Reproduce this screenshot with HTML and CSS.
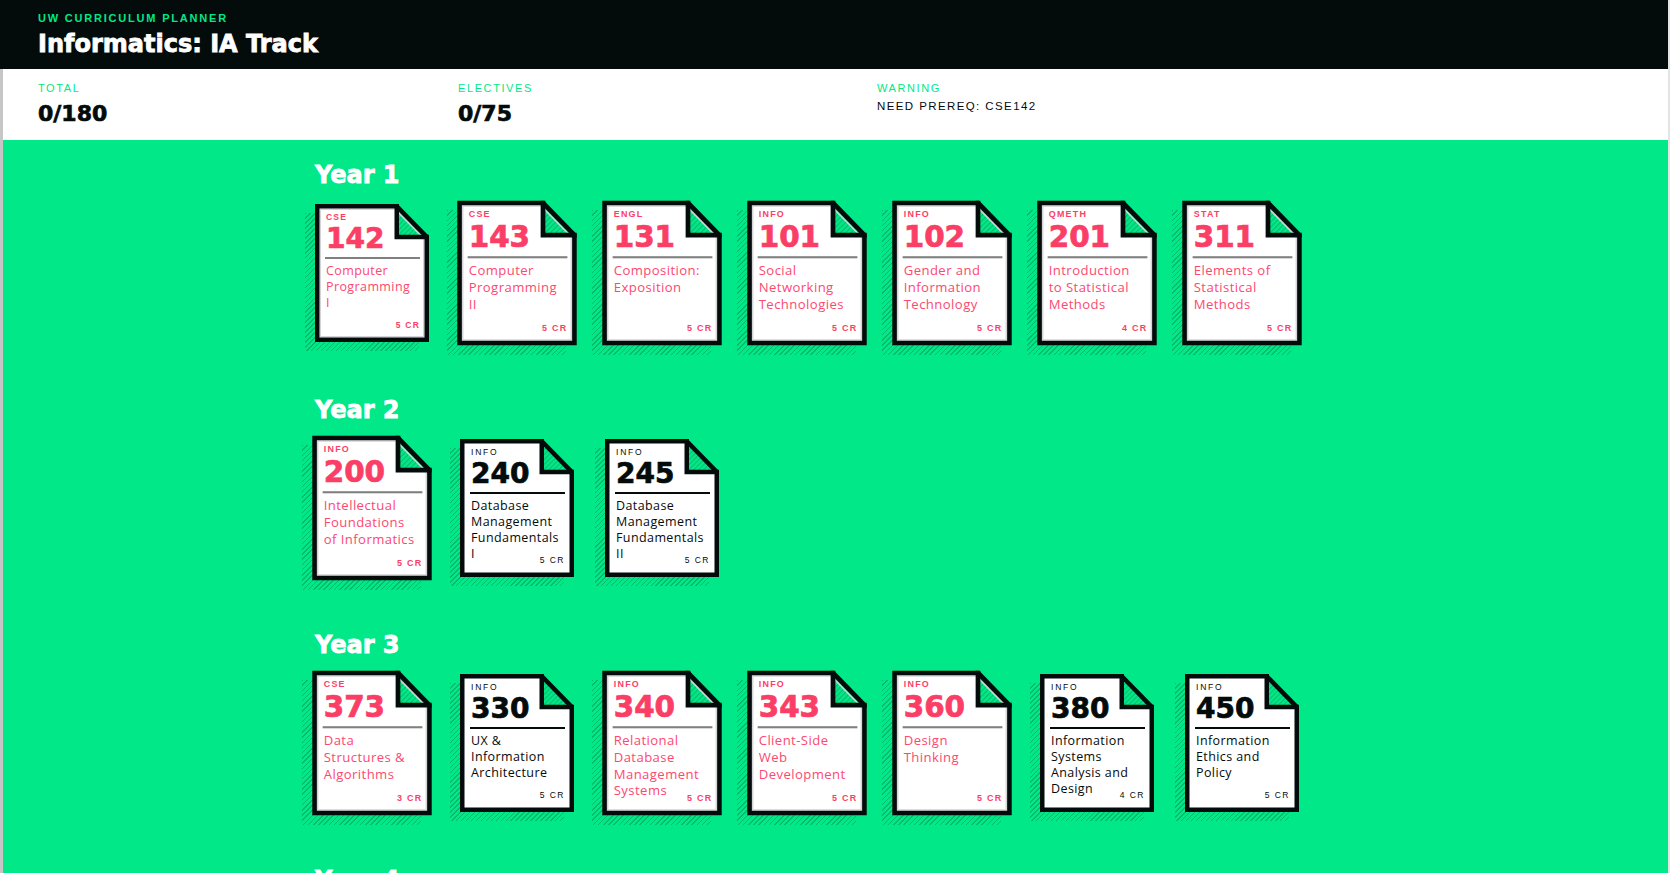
FILE: index.html
```html
<!DOCTYPE html>
<html lang="en">
<head>
<meta charset="utf-8">
<title>UW Curriculum Planner</title>
<link rel="stylesheet" href="styles.css">
</head>
<body>
<svg class="defs" aria-hidden="true">
  <defs>
    <pattern id="hatch" width="3.5" height="3.5" patternUnits="userSpaceOnUse" patternTransform="rotate(45)">
      <rect width="3.5" height="3.5" fill="#00e887"/>
      <rect width="1" height="3.5" fill="#07b96c"/>
    </pattern>
  </defs>
</svg>
<div class="page">
  <header class="top">
    <div class="app-name">UW CURRICULUM PLANNER</div>
    <h1 class="app-title">Informatics: IA Track</h1>
  </header>

  <section class="stats">
    <div class="stat">
      <div class="stat-label">TOTAL</div>
      <div class="stat-value">0/180</div>
    </div>
    <div class="stat">
      <div class="stat-label">ELECTIVES</div>
      <div class="stat-value">0/75</div>
    </div>
    <div class="stat">
      <div class="stat-label">WARNING</div>
      <div class="stat-note">NEED PREREQ: CSE142</div>
    </div>
  </section>

  <main class="plan">
    <section class="year">
      <h2 class="year-title">Year 1</h2>
      <div class="cards">
        <div class="card red">
          <svg class="frame" viewBox="0 0 114 138"><polygon class="sheet" points="2.25,2.25 81.75,2.25 111.75,33 111.75,135.75 2.25,135.75"/><polygon class="fold" points="81.75,2.25 111.75,33 81.75,33"/><polygon class="inner" points="5.25,5.25 80,5.25 108.75,34.5 108.75,132.75 5.25,132.75"/><polygon class="outline" points="2.25,2.25 81.75,2.25 111.75,33 111.75,135.75 2.25,135.75"/><polyline class="crease" points="81.75,2.25 81.75,33 111.75,33"/></svg>
          <div class="dept">CSE</div><div class="num">142</div><div class="rule"></div>
          <div class="title">Computer Programming I</div><div class="cr">5 CR</div>
        </div>
        <div class="card red big">
          <svg class="frame" viewBox="0 0 114 138"><polygon class="sheet" points="2.25,2.25 81.75,2.25 111.75,33 111.75,135.75 2.25,135.75"/><polygon class="fold" points="81.75,2.25 111.75,33 81.75,33"/><polygon class="inner" points="5.25,5.25 80,5.25 108.75,34.5 108.75,132.75 5.25,132.75"/><polygon class="outline" points="2.25,2.25 81.75,2.25 111.75,33 111.75,135.75 2.25,135.75"/><polyline class="crease" points="81.75,2.25 81.75,33 111.75,33"/></svg>
          <div class="dept">CSE</div><div class="num">143</div><div class="rule"></div>
          <div class="title">Computer Programming II</div><div class="cr">5 CR</div>
        </div>
        <div class="card red big">
          <svg class="frame" viewBox="0 0 114 138"><polygon class="sheet" points="2.25,2.25 81.75,2.25 111.75,33 111.75,135.75 2.25,135.75"/><polygon class="fold" points="81.75,2.25 111.75,33 81.75,33"/><polygon class="inner" points="5.25,5.25 80,5.25 108.75,34.5 108.75,132.75 5.25,132.75"/><polygon class="outline" points="2.25,2.25 81.75,2.25 111.75,33 111.75,135.75 2.25,135.75"/><polyline class="crease" points="81.75,2.25 81.75,33 111.75,33"/></svg>
          <div class="dept">ENGL</div><div class="num">131</div><div class="rule"></div>
          <div class="title">Composition: Exposition</div><div class="cr">5 CR</div>
        </div>
        <div class="card red big">
          <svg class="frame" viewBox="0 0 114 138"><polygon class="sheet" points="2.25,2.25 81.75,2.25 111.75,33 111.75,135.75 2.25,135.75"/><polygon class="fold" points="81.75,2.25 111.75,33 81.75,33"/><polygon class="inner" points="5.25,5.25 80,5.25 108.75,34.5 108.75,132.75 5.25,132.75"/><polygon class="outline" points="2.25,2.25 81.75,2.25 111.75,33 111.75,135.75 2.25,135.75"/><polyline class="crease" points="81.75,2.25 81.75,33 111.75,33"/></svg>
          <div class="dept">INFO</div><div class="num">101</div><div class="rule"></div>
          <div class="title">Social Networking Technologies</div><div class="cr">5 CR</div>
        </div>
        <div class="card red big">
          <svg class="frame" viewBox="0 0 114 138"><polygon class="sheet" points="2.25,2.25 81.75,2.25 111.75,33 111.75,135.75 2.25,135.75"/><polygon class="fold" points="81.75,2.25 111.75,33 81.75,33"/><polygon class="inner" points="5.25,5.25 80,5.25 108.75,34.5 108.75,132.75 5.25,132.75"/><polygon class="outline" points="2.25,2.25 81.75,2.25 111.75,33 111.75,135.75 2.25,135.75"/><polyline class="crease" points="81.75,2.25 81.75,33 111.75,33"/></svg>
          <div class="dept">INFO</div><div class="num">102</div><div class="rule"></div>
          <div class="title">Gender and Information Technology</div><div class="cr">5 CR</div>
        </div>
        <div class="card red big">
          <svg class="frame" viewBox="0 0 114 138"><polygon class="sheet" points="2.25,2.25 81.75,2.25 111.75,33 111.75,135.75 2.25,135.75"/><polygon class="fold" points="81.75,2.25 111.75,33 81.75,33"/><polygon class="inner" points="5.25,5.25 80,5.25 108.75,34.5 108.75,132.75 5.25,132.75"/><polygon class="outline" points="2.25,2.25 81.75,2.25 111.75,33 111.75,135.75 2.25,135.75"/><polyline class="crease" points="81.75,2.25 81.75,33 111.75,33"/></svg>
          <div class="dept">QMETH</div><div class="num">201</div><div class="rule"></div>
          <div class="title">Introduction to Statistical Methods</div><div class="cr">4 CR</div>
        </div>
        <div class="card red big">
          <svg class="frame" viewBox="0 0 114 138"><polygon class="sheet" points="2.25,2.25 81.75,2.25 111.75,33 111.75,135.75 2.25,135.75"/><polygon class="fold" points="81.75,2.25 111.75,33 81.75,33"/><polygon class="inner" points="5.25,5.25 80,5.25 108.75,34.5 108.75,132.75 5.25,132.75"/><polygon class="outline" points="2.25,2.25 81.75,2.25 111.75,33 111.75,135.75 2.25,135.75"/><polyline class="crease" points="81.75,2.25 81.75,33 111.75,33"/></svg>
          <div class="dept">STAT</div><div class="num">311</div><div class="rule"></div>
          <div class="title">Elements of Statistical Methods</div><div class="cr">5 CR</div>
        </div>
      </div>
    </section>

    <section class="year">
      <h2 class="year-title">Year 2</h2>
      <div class="cards">
        <div class="card red big">
          <svg class="frame" viewBox="0 0 114 138"><polygon class="sheet" points="2.25,2.25 81.75,2.25 111.75,33 111.75,135.75 2.25,135.75"/><polygon class="fold" points="81.75,2.25 111.75,33 81.75,33"/><polygon class="inner" points="5.25,5.25 80,5.25 108.75,34.5 108.75,132.75 5.25,132.75"/><polygon class="outline" points="2.25,2.25 81.75,2.25 111.75,33 111.75,135.75 2.25,135.75"/><polyline class="crease" points="81.75,2.25 81.75,33 111.75,33"/></svg>
          <div class="dept">INFO</div><div class="num">200</div><div class="rule"></div>
          <div class="title">Intellectual Foundations of Informatics</div><div class="cr">5 CR</div>
        </div>
        <div class="card dark">
          <svg class="frame" viewBox="0 0 114 138"><polygon class="sheet" points="2.25,2.25 81.75,2.25 111.75,33 111.75,135.75 2.25,135.75"/><polygon class="fold" points="81.75,2.25 111.75,33 81.75,33"/><polygon class="outline" points="2.25,2.25 81.75,2.25 111.75,33 111.75,135.75 2.25,135.75"/><polyline class="crease" points="81.75,2.25 81.75,33 111.75,33"/></svg>
          <div class="dept">INFO</div><div class="num">240</div><div class="rule"></div>
          <div class="title">Database Management Fundamentals I</div><div class="cr">5 CR</div>
        </div>
        <div class="card dark">
          <svg class="frame" viewBox="0 0 114 138"><polygon class="sheet" points="2.25,2.25 81.75,2.25 111.75,33 111.75,135.75 2.25,135.75"/><polygon class="fold" points="81.75,2.25 111.75,33 81.75,33"/><polygon class="outline" points="2.25,2.25 81.75,2.25 111.75,33 111.75,135.75 2.25,135.75"/><polyline class="crease" points="81.75,2.25 81.75,33 111.75,33"/></svg>
          <div class="dept">INFO</div><div class="num">245</div><div class="rule"></div>
          <div class="title">Database Management Fundamentals II</div><div class="cr">5 CR</div>
        </div>
      </div>
    </section>

    <section class="year">
      <h2 class="year-title">Year 3</h2>
      <div class="cards">
        <div class="card red big">
          <svg class="frame" viewBox="0 0 114 138"><polygon class="sheet" points="2.25,2.25 81.75,2.25 111.75,33 111.75,135.75 2.25,135.75"/><polygon class="fold" points="81.75,2.25 111.75,33 81.75,33"/><polygon class="inner" points="5.25,5.25 80,5.25 108.75,34.5 108.75,132.75 5.25,132.75"/><polygon class="outline" points="2.25,2.25 81.75,2.25 111.75,33 111.75,135.75 2.25,135.75"/><polyline class="crease" points="81.75,2.25 81.75,33 111.75,33"/></svg>
          <div class="dept">CSE</div><div class="num">373</div><div class="rule"></div>
          <div class="title">Data Structures &amp; Algorithms</div><div class="cr">3 CR</div>
        </div>
        <div class="card dark">
          <svg class="frame" viewBox="0 0 114 138"><polygon class="sheet" points="2.25,2.25 81.75,2.25 111.75,33 111.75,135.75 2.25,135.75"/><polygon class="fold" points="81.75,2.25 111.75,33 81.75,33"/><polygon class="outline" points="2.25,2.25 81.75,2.25 111.75,33 111.75,135.75 2.25,135.75"/><polyline class="crease" points="81.75,2.25 81.75,33 111.75,33"/></svg>
          <div class="dept">INFO</div><div class="num">330</div><div class="rule"></div>
          <div class="title">UX &amp; Information Architecture</div><div class="cr">5 CR</div>
        </div>
        <div class="card red big">
          <svg class="frame" viewBox="0 0 114 138"><polygon class="sheet" points="2.25,2.25 81.75,2.25 111.75,33 111.75,135.75 2.25,135.75"/><polygon class="fold" points="81.75,2.25 111.75,33 81.75,33"/><polygon class="inner" points="5.25,5.25 80,5.25 108.75,34.5 108.75,132.75 5.25,132.75"/><polygon class="outline" points="2.25,2.25 81.75,2.25 111.75,33 111.75,135.75 2.25,135.75"/><polyline class="crease" points="81.75,2.25 81.75,33 111.75,33"/></svg>
          <div class="dept">INFO</div><div class="num">340</div><div class="rule"></div>
          <div class="title">Relational Database Management Systems</div><div class="cr">5 CR</div>
        </div>
        <div class="card red big">
          <svg class="frame" viewBox="0 0 114 138"><polygon class="sheet" points="2.25,2.25 81.75,2.25 111.75,33 111.75,135.75 2.25,135.75"/><polygon class="fold" points="81.75,2.25 111.75,33 81.75,33"/><polygon class="inner" points="5.25,5.25 80,5.25 108.75,34.5 108.75,132.75 5.25,132.75"/><polygon class="outline" points="2.25,2.25 81.75,2.25 111.75,33 111.75,135.75 2.25,135.75"/><polyline class="crease" points="81.75,2.25 81.75,33 111.75,33"/></svg>
          <div class="dept">INFO</div><div class="num">343</div><div class="rule"></div>
          <div class="title">Client-Side Web Development</div><div class="cr">5 CR</div>
        </div>
        <div class="card red big">
          <svg class="frame" viewBox="0 0 114 138"><polygon class="sheet" points="2.25,2.25 81.75,2.25 111.75,33 111.75,135.75 2.25,135.75"/><polygon class="fold" points="81.75,2.25 111.75,33 81.75,33"/><polygon class="inner" points="5.25,5.25 80,5.25 108.75,34.5 108.75,132.75 5.25,132.75"/><polygon class="outline" points="2.25,2.25 81.75,2.25 111.75,33 111.75,135.75 2.25,135.75"/><polyline class="crease" points="81.75,2.25 81.75,33 111.75,33"/></svg>
          <div class="dept">INFO</div><div class="num">360</div><div class="rule"></div>
          <div class="title">Design Thinking</div><div class="cr">5 CR</div>
        </div>
        <div class="card dark">
          <svg class="frame" viewBox="0 0 114 138"><polygon class="sheet" points="2.25,2.25 81.75,2.25 111.75,33 111.75,135.75 2.25,135.75"/><polygon class="fold" points="81.75,2.25 111.75,33 81.75,33"/><polygon class="outline" points="2.25,2.25 81.75,2.25 111.75,33 111.75,135.75 2.25,135.75"/><polyline class="crease" points="81.75,2.25 81.75,33 111.75,33"/></svg>
          <div class="dept">INFO</div><div class="num">380</div><div class="rule"></div>
          <div class="title">Information Systems Analysis and Design</div><div class="cr">4 CR</div>
        </div>
        <div class="card dark">
          <svg class="frame" viewBox="0 0 114 138"><polygon class="sheet" points="2.25,2.25 81.75,2.25 111.75,33 111.75,135.75 2.25,135.75"/><polygon class="fold" points="81.75,2.25 111.75,33 81.75,33"/><polygon class="outline" points="2.25,2.25 81.75,2.25 111.75,33 111.75,135.75 2.25,135.75"/><polyline class="crease" points="81.75,2.25 81.75,33 111.75,33"/></svg>
          <div class="dept">INFO</div><div class="num">450</div><div class="rule"></div>
          <div class="title">Information Ethics and Policy</div><div class="cr">5 CR</div>
        </div>
      </div>
    </section>

    <section class="year">
      <h2 class="year-title">Year 4</h2>
    </section>
  </main>
</div>
</body>
</html>
```
FILE: styles.css
```css
* { box-sizing: border-box; }

html, body {
  margin: 0;
  padding: 0;
}

body {
  background: #e4e4e4;
  font-family: "Liberation Sans", Arial, sans-serif;
  color: #040b0b;
}

.defs {
  display: block;
  width: 0;
  height: 0;
  overflow: hidden;
}

.page {
  width: 1668px;
}

/* ---------- header ---------- */
.top {
  background: #040b0b;
  height: 69px;
  padding: 12px 0 0 38px;
}

.app-name {
  color: #00e887;
  font-size: 11px;
  font-weight: 700;
  letter-spacing: 1.8px;
  line-height: 13px;
}

.app-title {
  margin: 4px 0 0;
  color: #ffffff;
  font-family: "DejaVu Sans", sans-serif;
  font-weight: 700;
  font-size: 24px;
  line-height: 30px;
  -webkit-text-stroke: 0.8px #ffffff;
}

/* ---------- stats ---------- */
.stats {
  background: #ffffff;
  height: 71px;
  border-left: 3px solid #c6c6c6;
  padding: 13px 0 0 35px;
  display: grid;
  grid-template-columns: 420px 419px 1fr;
}

.stat-label {
  color: #00e887;
  font-size: 11px;
  letter-spacing: 1.6px;
  line-height: 12px;
}

.stat-value {
  margin-top: 7px;
  font-family: "DejaVu Sans", sans-serif;
  font-weight: 700;
  font-size: 22px;
  line-height: 26px;
  color: #040b0b;
  -webkit-text-stroke: 0.7px #040b0b;
}

.stat-note {
  margin-top: 5px;
  font-size: 11.5px;
  letter-spacing: 1.4px;
  line-height: 14px;
  color: #040b0b;
}

/* ---------- plan ---------- */
.plan {
  background: #00e887;
  border-left: 3px solid #c6c6c6;
  padding: 20px 0 40px 312px;
}

.year {
  margin-bottom: 53px;
}

.year-title {
  margin: 0;
  color: #ffffff;
  font-family: "DejaVu Sans", sans-serif;
  font-weight: 700;
  font-size: 24px;
  line-height: 30px;
  -webkit-text-stroke: 0.8px #ffffff;
}

.cards {
  display: flex;
  gap: 31px;
  margin-top: 14px;
}

/* ---------- course card ---------- */
.card {
  position: relative;
  isolation: isolate;
  flex: none;
  width: 114px;
  height: 138px;
  padding: 8px 0 0 11px;
}

.card.big {
  transform: scale(1.05);
}

.card::before {
  content: "";
  position: absolute;
  left: -10px;
  top: 9px;
  width: 100%;
  height: 100%;
  z-index: -1;
  background: repeating-linear-gradient(135deg, #07b96c 0 1px, transparent 1px 3.5px);
  clip-path: polygon(0 0, 72% 0, 100% 24%, 100% 100%, 0 100%);
}

.frame {
  position: absolute;
  left: 0;
  top: 0;
  width: 100%;
  height: 100%;
  z-index: -1;
  display: block;
}

.sheet {
  fill: #ffffff;
  stroke: none;
}

.fold {
  fill: url(#hatch);
  stroke: none;
}

.inner {
  fill: none;
  stroke: #d4d4d4;
  stroke-width: 1.5;
}

.outline {
  fill: none;
  stroke: #040b0b;
  stroke-width: 4.5;
  stroke-linejoin: miter;
}

.crease {
  fill: none;
  stroke: #040b0b;
  stroke-width: 4.5;
  stroke-linejoin: miter;
  stroke-linecap: square;
}

.dept {
  font-size: 8.5px;
  line-height: 11px;
  letter-spacing: 1.8px;
}

.num {
  margin-top: 2px;
  font-family: "DejaVu Sans", sans-serif;
  font-weight: 700;
  font-size: 28px;
  line-height: 28px;
  -webkit-text-stroke: 0.7px currentColor;
}

.rule {
  margin: 4px 0 0 -1px;
  width: 95px;
  height: 2px;
  background: #808080;
}

.title {
  margin-top: 4px;
  width: 90px;
  font-family: "Open Sans", sans-serif;
  font-size: 12.5px;
  line-height: 16px;
  letter-spacing: 0.4px;
}

.cr {
  position: absolute;
  right: 9px;
  bottom: 12px;
  font-size: 8.5px;
  line-height: 9px;
  letter-spacing: 1.5px;
}

.red {
  color: #fb3e66;
}

.red .dept,
.red .cr {
  font-weight: 700;
  letter-spacing: 1.2px;
}

.red .title {
  color: #fd4870;
}

.dark {
  color: #040b0b;
}

.dark .rule {
  background: #040b0b;
  height: 1.5px;
}
```
